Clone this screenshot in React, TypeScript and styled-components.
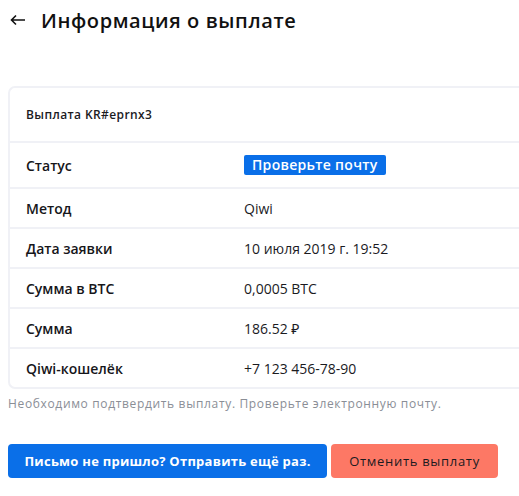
import React from "react";
import styled, { createGlobalStyle } from "styled-components";

const Global = createGlobalStyle`
  html, body { margin: 0; padding: 0; background: #fff; overflow: hidden; }
  body { font-family: "Open Sans", "Noto Sans", sans-serif; color: #1b1b1f; }
`;

const Page = styled.div`
  width: 519px;
  padding: 0 0 0 8px;
  box-sizing: border-box;
`;

const Header = styled.div`
  display: flex;
  align-items: center;
  height: 40px;
  padding-left: 2px;
  gap: 15px;
`;

const Back = styled.svg`
  width: 16px;
  height: 12px;
  display: block;
`;

const Title = styled.h1`
  margin: 0;
  font-size: 20px;
  font-weight: 600;
  letter-spacing: 0.6px;
  color: #111;
`;

const Card = styled.div`
  margin-top: 46px;
  border: 2px solid #f0f1f6;
  border-right: none;
  border-radius: 7px 0 0 7px;
  background: #fff;
`;

const CardHead = styled.div`
  height: 53px;
  display: flex;
  align-items: center;
  padding-left: 16px;
  font-size: 12px;
  font-weight: 600;
  letter-spacing: 0.4px;
  border-bottom: 2px solid #f0f1f6;
`;

const Row = styled.div<{ $tall?: boolean; $last?: boolean }>`
  height: ${(p) => (p.$tall ? 44 : 38)}px;
  display: grid;
  grid-template-columns: 218px 1fr;
  align-items: center;
  padding-left: 16px;
  font-size: 14px;
  border-bottom: ${(p) => (p.$last ? "none" : "2px solid #f0f1f6")};
`;

const Label = styled.span`
  font-weight: 600;
  color: #16161a;
`;

const Value = styled.span`
  font-weight: 400;
  color: #1b1b1f;
`;

const Badge = styled.span`
  justify-self: start;
  background: #0a6fe8;
  color: #fff;
  font-weight: 600;
  font-size: 14px;
  letter-spacing: 0.3px;
  padding: 0 8px;
  height: 20px;
  line-height: 20px;
  border-radius: 2px;
`;

const Note = styled.p`
  margin: 6px 0 0;
  font-size: 12px;
  letter-spacing: 0.65px;
  color: #8a8e96;
  font-weight: 500;
`;

const Actions = styled.div`
  display: flex;
  gap: 4px;
  margin-top: 32px;
`;

const Button = styled.button<{ $variant: "primary" | "danger" }>`
  height: 34px;
  border: none;
  border-radius: 4px;
  font-family: inherit;
  font-size: 13px;
  padding: 0;
  width: ${(p) => (p.$variant === "primary" ? 319 : 167)}px;
  background: ${(p) => (p.$variant === "primary" ? "#0a6fe8" : "#fd7865")};
  color: ${(p) => (p.$variant === "primary" ? "#fff" : "#1b1b1f")};
  font-weight: ${(p) => (p.$variant === "primary" ? 700 : 400)};
  letter-spacing: ${(p) => (p.$variant === "primary" ? 0.25 : 0.7)}px;
`;

const rows: [string, string][] = [
  ["Метод", "Qiwi"],
  ["Дата заявки", "10 июля 2019 г. 19:52"],
  ["Сумма в BTC", "0,0005 BTC"],
  ["Сумма", "186.52 ₽"],
  ["Qiwi-кошелёк", "+7 123 456-78-90"],
];

export default function App() {
  return (
    <Page>
      <Global />
      <Header>
        <Back viewBox="0 0 16 12">
          <path d="M15 6H1.5M6 1.5L1.5 6L6 10.5" fill="none" stroke="#111" strokeWidth="1.6" />
        </Back>
        <Title>Информация о выплате</Title>
      </Header>
      <Card>
        <CardHead>Выплата KR#eprnx3</CardHead>
        <Row $tall>
          <Label>Статус</Label>
          <Badge>Проверьте почту</Badge>
        </Row>
        {rows.map(([l, v], i) => (
          <Row key={l} $last={i === rows.length - 1}>
            <Label>{l}</Label>
            <Value>{v}</Value>
          </Row>
        ))}
      </Card>
      <Note>Необходимо подтвердить выплату. Проверьте электронную почту.</Note>
      <Actions>
        <Button $variant="primary">Письмо не пришло? Отправить ещё раз.</Button>
        <Button $variant="danger">Отменить выплату</Button>
      </Actions>
    </Page>
  );
}
